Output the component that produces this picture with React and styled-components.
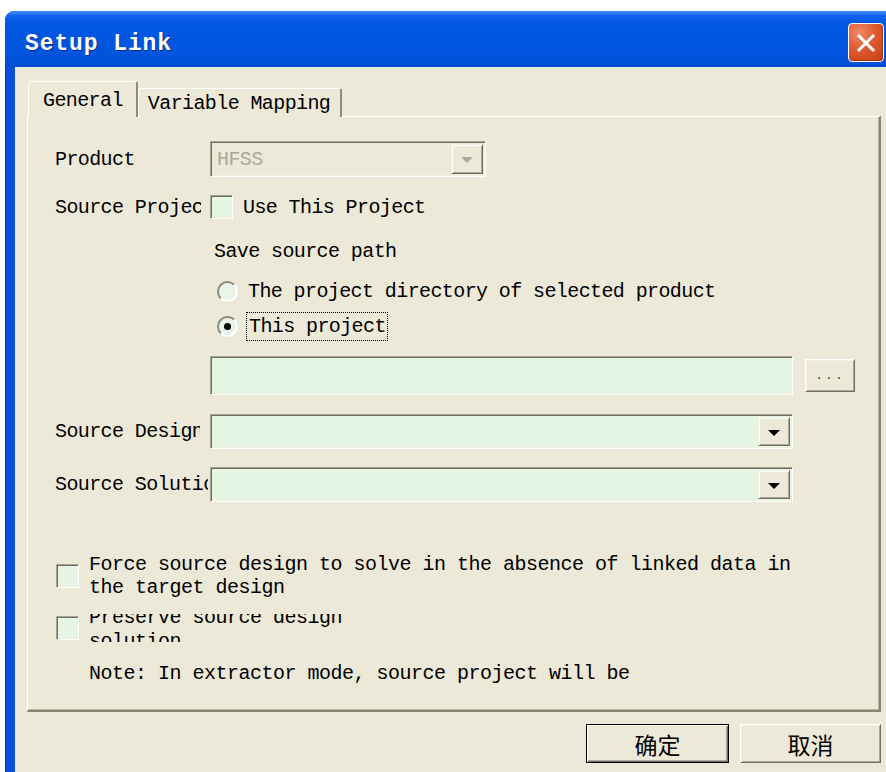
import React from 'react';
import styled, { createGlobalStyle } from 'styled-components';

const GlobalStyle = createGlobalStyle`
  html, body {
    margin: 0;
    padding: 0;
    background: #fff;
    overflow: hidden;
  }
  body {
    font-family: 'Liberation Mono', 'Noto Sans CJK SC', monospace;
    font-size: 20px;
    letter-spacing: -0.6px;
    color: #000;
  }
`;

const Screen = styled.div`
  width: 886px;
  height: 772px;
  padding-top: 11px;
  box-sizing: border-box;
  overflow: hidden;
  background: #fff;
`;

const Window = styled.div`
  margin-left: 5px;
  width: 881px;
  height: 761px;
  display: flex;
  flex-direction: column;
  border-radius: 9px 0 0 0;
  overflow: hidden;
  background: linear-gradient(to right, #0831c0 0, #0a4fdc 2px, #0c58e8 100%);
`;

const TitleBar = styled.div`
  height: 56px;
  flex: none;
  display: flex;
  align-items: flex-start;
  padding-left: 20px;
  background: linear-gradient(
    to bottom,
    #3d8ef8 0,
    #2f82f5 2px,
    #1565ee 4px,
    #0058e3 12px,
    #0055de 70%,
    #004fd6 100%
  );
`;

const Title = styled.h1`
  margin: 20px 0 0;
  font-family: 'Liberation Mono', monospace;
  font-size: 23px;
  font-weight: bold;
  letter-spacing: 0.9px;
  color: #fff;
  text-shadow: 1px 1px 0 #0a2a8a;
`;

const CloseButton = styled.div`
  margin: 12px 2px 0 auto;
  width: 36px;
  height: 39px;
  box-sizing: border-box;
  border: 1px solid #fff;
  border-radius: 4px;
  background: radial-gradient(circle at 30% 25%, #ef8a66 0, #e05a30 45%, #c43c12 100%);
  display: flex;
  align-items: center;
  justify-content: center;
  box-shadow: inset -1px -1px 0 rgba(120, 30, 0, 0.5);
`;

const Body = styled.div`
  flex: 1;
  margin-left: 10px;
  background: #ece9d8;
  padding: 15px 5px 0 12px;
  display: flex;
  flex-direction: column;
`;

const TabRow = styled.div`
  display: flex;
  align-items: flex-end;
  height: 35px;
  margin-bottom: -1px;
  position: relative;
  z-index: 1;
`;

const Tab = styled.div`
  height: ${p => (p.$active ? 36 : 29)}px;
  margin-left: ${p => (p.$active ? 1 : 0)}px;
  padding: ${p => (p.$active ? '1px 13px 0 14px' : '0 10px 0 9px')};
  box-sizing: border-box;
  display: flex;
  align-items: center;
  background: #ece9d8;
  border-top: 1px solid #fff;
  border-left: 1px solid #fff;
  border-right: 2px solid #8f8c7c;
  border-radius: 3px 3px 0 0;
`;

const Panel = styled.div`
  width: 854px;
  height: 596px;
  box-sizing: border-box;
  border-top: 1px solid #fff;
  border-left: 1px solid #fff;
  border-right: 2px solid #85826f;
  border-bottom: 2px solid #85826f;
  box-shadow: inset -1px -1px 0 #b9b6a6;
  padding-left: 27px;
  display: flex;
  flex-direction: column;
`;

const Row = styled.div`
  display: flex;
  align-items: center;
  height: ${p => p.$h}px;
  margin-top: ${p => p.$mt}px;
  flex: none;
`;

const LabelCell = styled.div`
  width: 155px;
  flex: none;
`;

const Label = styled.div`
  width: ${p => p.$clip || 155}px;
  overflow: hidden;
  white-space: nowrap;
`;

const Indent = styled.div`
  display: flex;
  align-items: center;
  margin-left: ${p => p.$ml || 0}px;
`;

const Field = styled.div`
  width: ${p => p.$w}px;
  height: ${p => p.$h}px;
  box-sizing: border-box;
  border: 1px solid;
  border-color: #a7a494 #fff #fff #a7a494;
  box-shadow: inset 1px 1px 0 #6f6d61, inset -1px -1px 0 #f1efe2;
  background: ${p => (p.$disabled ? '#ece9d8' : '#e5f6e5')};
  display: flex;
  align-items: stretch;
  padding: 2px;
`;

const FieldText = styled.div`
  flex: 1;
  display: flex;
  align-items: center;
  padding-left: 4px;
  color: ${p => (p.$disabled ? '#aca899' : '#000')};
`;

const DropButton = styled.div`
  width: 32px;
  box-sizing: border-box;
  background: #ece9d8;
  border: 1px solid;
  border-color: #f1efe2 #716f64 #716f64 #f1efe2;
  box-shadow: inset 1px 1px 0 #fff, inset -1px -1px 0 #aca899;
  display: flex;
  align-items: center;
  justify-content: center;

  &::after {
    content: '';
    border-left: 6px solid transparent;
    border-right: 6px solid transparent;
    border-top: 6px solid ${p => (p.$disabled ? '#aca899' : '#000')};
    margin-top: 2px;
  }
`;

const RaisedButton = styled.div`
  width: ${p => p.$w}px;
  height: ${p => p.$h}px;
  box-sizing: border-box;
  margin-left: ${p => p.$ml || 0}px;
  background: #ece9d8;
  border: 1px solid;
  border-color: ${p => (p.$default ? '#000' : '#fff #716f64 #716f64 #fff')};
  box-shadow: ${p =>
    p.$default
      ? 'inset 1px 1px 0 #fff, inset -1px -1px 0 #716f64, inset -2px -2px 0 #aca899'
      : 'inset 1px 1px 0 #f1efe2, inset -1px -1px 0 #aca899'};
  display: flex;
  align-items: center;
  justify-content: center;
  font-family: 'Noto Sans CJK SC', 'Liberation Sans', sans-serif;
  font-size: 23px;
  letter-spacing: 0;
  color: #000;
`;

const Check = styled.div`
  width: 23px;
  height: 24px;
  flex: none;
  box-sizing: border-box;
  border: 1px solid;
  border-color: #a7a494 #fff #fff #a7a494;
  box-shadow: inset 1px 1px 0 #6f6d61, inset -1px -1px 0 #f1efe2;
  background: #e5f6e5;
  margin-left: ${p => p.$ml || 0}px;
`;

const Radio = styled.div`
  width: 21px;
  height: 21px;
  flex: none;
  box-sizing: border-box;
  border-radius: 50%;
  border: 2px solid;
  border-color: #8e8b7d #fff #fff #8e8b7d;
  background: #e8f5e8;
  display: flex;
  align-items: center;
  justify-content: center;

  &::after {
    content: '';
    display: ${p => (p.$checked ? 'block' : 'none')};
    width: 7px;
    height: 7px;
    border-radius: 50%;
    background: #000;
  }
`;

const Caption = styled.span`
  margin-left: 10px;
  white-space: nowrap;
`;

const Focused = styled.span`
  margin-left: 8px;
  padding: 2px 1px 2px 2px;
  border: 1px dotted #000;
  white-space: nowrap;
`;

const OptionRow = styled.div`
  display: flex;
  align-items: center;
  height: ${p => p.$h}px;
  margin-top: ${p => p.$mt}px;
  flex: none;
`;

const OptionText = styled.div`
  margin-left: 10px;
  line-height: 23px;
  letter-spacing: -0.5px;
`;

/* the second option's caption sits in a box too short for its two lines */
const ClippedText = styled.div`
  margin-left: 10px;
  height: 28px;
  overflow: hidden;
  letter-spacing: -0.5px;

  & > div {
    margin-top: -8px;
    line-height: 24px;
  }
`;

const Note = styled.div`
  margin: 20px 0 0 34px;
  height: 24px;
  line-height: 24px;
  white-space: nowrap;
  letter-spacing: -0.5px;
`;

const Footer = styled.div`
  display: flex;
  justify-content: flex-end;
  gap: 11px;
  margin-top: 12px;
`;

const Dots = styled.span`
  font-family: 'Liberation Mono', monospace;
  font-size: 13px;
  letter-spacing: 2px;
  color: #444;
  margin-top: -1px;
`;

const CloseGlyph = () => (
  <svg width="22" height="22" viewBox="0 0 22 22">
    <path d="M4 4 L18 18 M18 4 L4 18" stroke="#fff" strokeWidth="3" strokeLinecap="square" />
  </svg>
);

export default function App() {
  return (
    <>
      <GlobalStyle />
      <Screen>
        <Window>
          <TitleBar>
            <Title>Setup Link</Title>
            <CloseButton>
              <CloseGlyph />
            </CloseButton>
          </TitleBar>
          <Body>
            <TabRow>
              <Tab $active>General</Tab>
              <Tab>Variable Mapping</Tab>
            </TabRow>
            <Panel>
              <Row $h={36} $mt={24}>
                <LabelCell><Label>Product</Label></LabelCell>
                <Field $w={276} $h={36} $disabled>
                  <FieldText $disabled>HFSS</FieldText>
                  <DropButton $disabled />
                </Field>
              </Row>

              <Row $h={24} $mt={18}>
                <LabelCell><Label $clip={146}>Source Project</Label></LabelCell>
                <Check />
                <Caption>Use This Project</Caption>
              </Row>

              <Row $h={24} $mt={20}>
                <LabelCell />
                <Indent $ml={4}>Save source path</Indent>
              </Row>

              <Row $h={22} $mt={17}>
                <LabelCell />
                <Indent $ml={7}>
                  <Radio />
                  <Caption>The project directory of selected product</Caption>
                </Indent>
              </Row>

              <Row $h={22} $mt={13}>
                <LabelCell />
                <Indent $ml={7}>
                  <Radio $checked />
                  <Focused>This project</Focused>
                </Indent>
              </Row>

              <Row $h={39} $mt={19}>
                <LabelCell />
                <Field $w={583} $h={39}>
                  <FieldText />
                </Field>
                <RaisedButton $w={50} $h={33} $ml={12}>
                  <Dots>...</Dots>
                </RaisedButton>
              </Row>

              <Row $h={35} $mt={19}>
                <LabelCell><Label $clip={145}>Source Design</Label></LabelCell>
                <Field $w={583} $h={35}>
                  <FieldText />
                  <DropButton />
                </Field>
              </Row>

              <Row $h={35} $mt={18}>
                <LabelCell><Label $clip={153}>Source Solution</Label></LabelCell>
                <Field $w={583} $h={35}>
                  <FieldText />
                  <DropButton />
                </Field>
              </Row>

              <OptionRow $h={46} $mt={51}>
                <Check $ml={1} />
                <OptionText>
                  Force source design to solve in the absence of linked data in
                  <br />
                  the target design
                </OptionText>
              </OptionRow>

              <OptionRow $h={28} $mt={15}>
                <Check $ml={1} />
                <ClippedText>
                  <div>
                    Preserve source design
                    <br />
                    solution
                  </div>
                </ClippedText>
              </OptionRow>

              <Note>Note: In extractor mode, source project will be</Note>
            </Panel>

            <Footer>
              <RaisedButton $w={143} $h={39} $default>确定</RaisedButton>
              <RaisedButton $w={141} $h={39}>取消</RaisedButton>
            </Footer>
          </Body>
        </Window>
      </Screen>
    </>
  );
}
